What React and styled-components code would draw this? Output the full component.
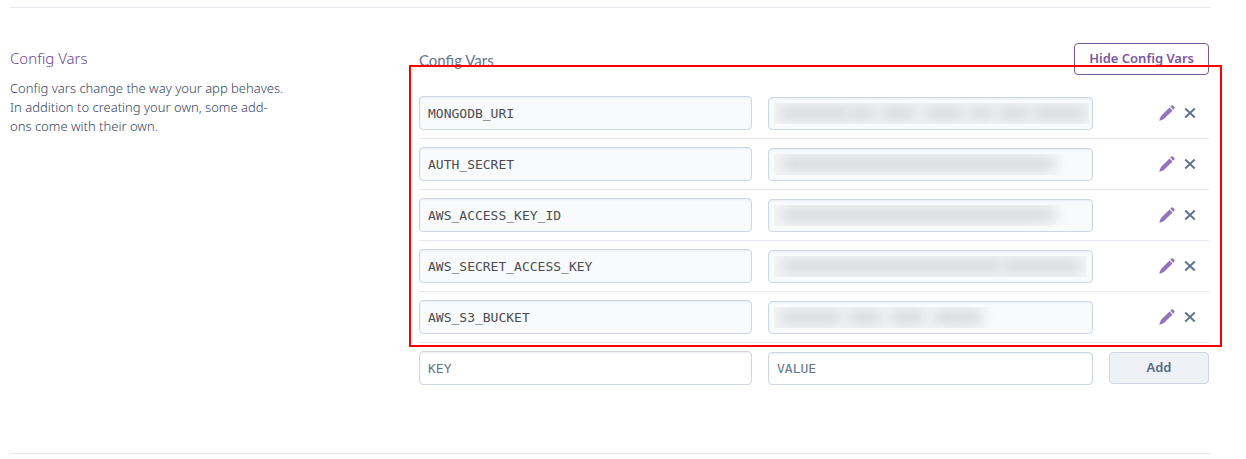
import React from "react";
import styled, { createGlobalStyle, css } from "styled-components";

const GlobalStyle = createGlobalStyle`
  *, *::before, *::after { box-sizing: border-box; }
  body {
    margin: 0;
    background: #fff;
    color: #596981;
    font-family: "Noto Sans", "Open Sans", sans-serif;
    font-size: 13px;
    line-height: 19px;
  }
`;

const Page = styled.main`
  padding: 7px 36px 5px 10px;
`;

const Section = styled.section`
  display: grid;
  grid-template-columns: minmax(0, 409fr) minmax(0, 790fr);
  padding: 35px 1px 68px 0;
  border-top: 1px solid #e6e9f0;
  border-bottom: 1px solid #e6e9f0;
`;

const Intro = styled.div`
  max-width: 276px;
  padding-top: 3px;
`;

const SectionTitle = styled.h2`
  margin: 0 0 9px;
  color: #6a4496;
  font-size: 15px;
  font-weight: 300;
  line-height: 24px;
`;

const Description = styled.p`
  margin: 0;
  color: #35455e;
  font-weight: 300;
`;

const PanelHeader = styled.header`
  display: flex;
  align-items: center;
  justify-content: space-between;
  margin-bottom: 13px;
`;

const PanelTitle = styled.h3`
  margin: 0;
  padding-top: 2px;
  font-family: Lato, sans-serif;
  font-size: 15px;
  font-weight: 400;
  color: #66758c;
`;

const Button = styled.button`
  height: 32px;
  padding: 0 14px 2px;
  border: 1px solid ${(p) => (p.$outline ? "#79589f" : "#cfd7e6")};
  border-radius: 4px;
  background: ${(p) => (p.$outline ? "#fff" : "#eef1f6")};
  color: ${(p) => (p.$outline ? "#79589f" : "#596981")};
  font-family: inherit;
  font-size: 13px;
  font-weight: 600;
  cursor: pointer;
`;

const columns = css`
  display: grid;
  grid-template-columns: minmax(0, 333fr) minmax(0, 325fr) 100px;
  column-gap: 16px;
`;

const SavedVars = styled.div`
  position: relative;
`;

const Highlight = styled.div`
  position: absolute;
  inset: -23px -13px -4px -10px;
  border: 2px solid #f00;
  pointer-events: none;
`;

const VarTable = styled.table`
  display: block;
  border-spacing: 0;

  tbody { display: block; }
`;

const VarRow = styled.tr`
  ${columns}
  align-items: end;
  padding: 8px 0;
  border-bottom: 1px solid #e6e9f3;
`;

const Cell = styled.td`
  position: relative;
  display: block;
  padding: 0;
`;

const Field = styled.input`
  display: block;
  width: 100%;
  height: ${(p) => (p.$value ? 33 : 34)}px;
  padding: 0 8px;
  border: 1px solid #cfd7e6;
  border-radius: 4px;
  outline: 0;
  background: ${(p) => (p.readOnly ? "#f9fafc" : "#fff")};
  box-shadow: inset 0 1px 2px #e9edf4;
  color: #4a4c50;
  font-family: "DejaVu Sans Mono", monospace;
  font-size: 13px;

  &::placeholder { color: #62748e; opacity: 1; }
`;

const Redaction = styled.span`
  position: absolute;
  top: 6px;
  left: 6px;
  width: ${(p) => p.$width}%;
  height: 21px;
  overflow: hidden;
  background: linear-gradient(90deg, #f3f4f5 85%, ${(p) => (p.$fade ? "#f9fafc" : "#f3f4f5")});
`;

const Smudge = styled.span`
  position: absolute;
  top: 3px;
  left: ${(p) => p.$from}%;
  width: ${(p) => p.$size}%;
  height: 14px;
  background: #dadbdd;
  filter: blur(6px);
`;

const Actions = styled.td`
  display: flex;
  align-items: center;
  justify-content: flex-end;
  gap: 9px;
  height: 34px;
  padding: 0 13px 0 0;
`;

const IconButton = styled.button`
  display: flex;
  padding: 0;
  border: 0;
  background: none;
  color: ${(p) => (p.$edit ? "#9573bb" : "#62748e")};
  cursor: pointer;
`;

const AddForm = styled.form`
  ${columns}
  align-items: end;
  padding-top: 8px;

  button { align-self: center; }
`;

const PencilIcon = () => (
  <svg width="16" height="16" viewBox="0 0 16 16" fill="currentColor" aria-hidden="true">
    <path d="M10.5 2.4 13.6 5.5 5.2 13.7Q3 15.4.3 15.8.6 13 2.2 10.7ZM11.3 1.7 12.4.6Q13.2 0 13.9.6L15.4 2.1Q16 2.8 15.4 3.5L14.3 4.7Z" />
  </svg>
);

const CloseIcon = () => (
  <svg width="12" height="12" viewBox="0 0 12 12" fill="none" stroke="currentColor" strokeWidth="2" aria-hidden="true">
    <path d="M1.2 1.5 10.8 10.5M10.8 1.5 1.2 10.5" />
  </svg>
);

const vars = [
  { name: "MONGODB_URI", width: 97, smudges: [[2, 22], [24, 8], [34, 11], [48, 12], [62, 7], [71, 10], [82, 17]] },
  { name: "AUTH_SECRET", width: 90, fade: true, smudges: [[3, 93]] },
  { name: "AWS_ACCESS_KEY_ID", width: 90, fade: true, smudges: [[3, 93]] },
  { name: "AWS_SECRET_ACCESS_KEY", width: 96, smudges: [[3, 69], [73, 25]] },
  { name: "AWS_S3_BUCKET", width: 68, fade: true, smudges: [[3, 27], [34, 14], [53, 15], [73, 21]] },
];

export default function App() {
  return (
    <>
      <GlobalStyle />
      <Page>
        <Section>
          <Intro>
            <SectionTitle>Config Vars</SectionTitle>
            <Description>
              Config vars change the way your app behaves. In addition to creating your own, some add-ons come with
              their own.
            </Description>
          </Intro>
          <div>
            <PanelHeader>
              <PanelTitle>Config Vars</PanelTitle>
              <Button type="button" $outline>Hide Config Vars</Button>
            </PanelHeader>
            <SavedVars>
              <VarTable aria-label="Config Vars">
                <tbody>
                  {vars.map((item) => (
                    <VarRow key={item.name}>
                      <Cell>
                        <Field readOnly aria-label="Key" value={item.name} />
                      </Cell>
                      <Cell>
                        <Field readOnly $value aria-label={`Value of ${item.name}`} value="" />
                        <Redaction aria-hidden="true" $width={item.width} $fade={item.fade}>
                          {item.smudges.map(([from, size]) => (
                            <Smudge key={from} $from={from} $size={size} />
                          ))}
                        </Redaction>
                      </Cell>
                      <Actions>
                        <IconButton type="button" $edit aria-label={`Edit ${item.name}`}><PencilIcon /></IconButton>
                        <IconButton type="button" aria-label={`Remove ${item.name}`}><CloseIcon /></IconButton>
                      </Actions>
                    </VarRow>
                  ))}
                </tbody>
              </VarTable>
              <Highlight />
            </SavedVars>
            <AddForm onSubmit={(event) => event.preventDefault()}>
              <Field aria-label="New key" placeholder="KEY" />
              <Field $value aria-label="New value" placeholder="VALUE" />
              <Button type="submit">Add</Button>
            </AddForm>
          </div>
        </Section>
      </Page>
    </>
  );
}
